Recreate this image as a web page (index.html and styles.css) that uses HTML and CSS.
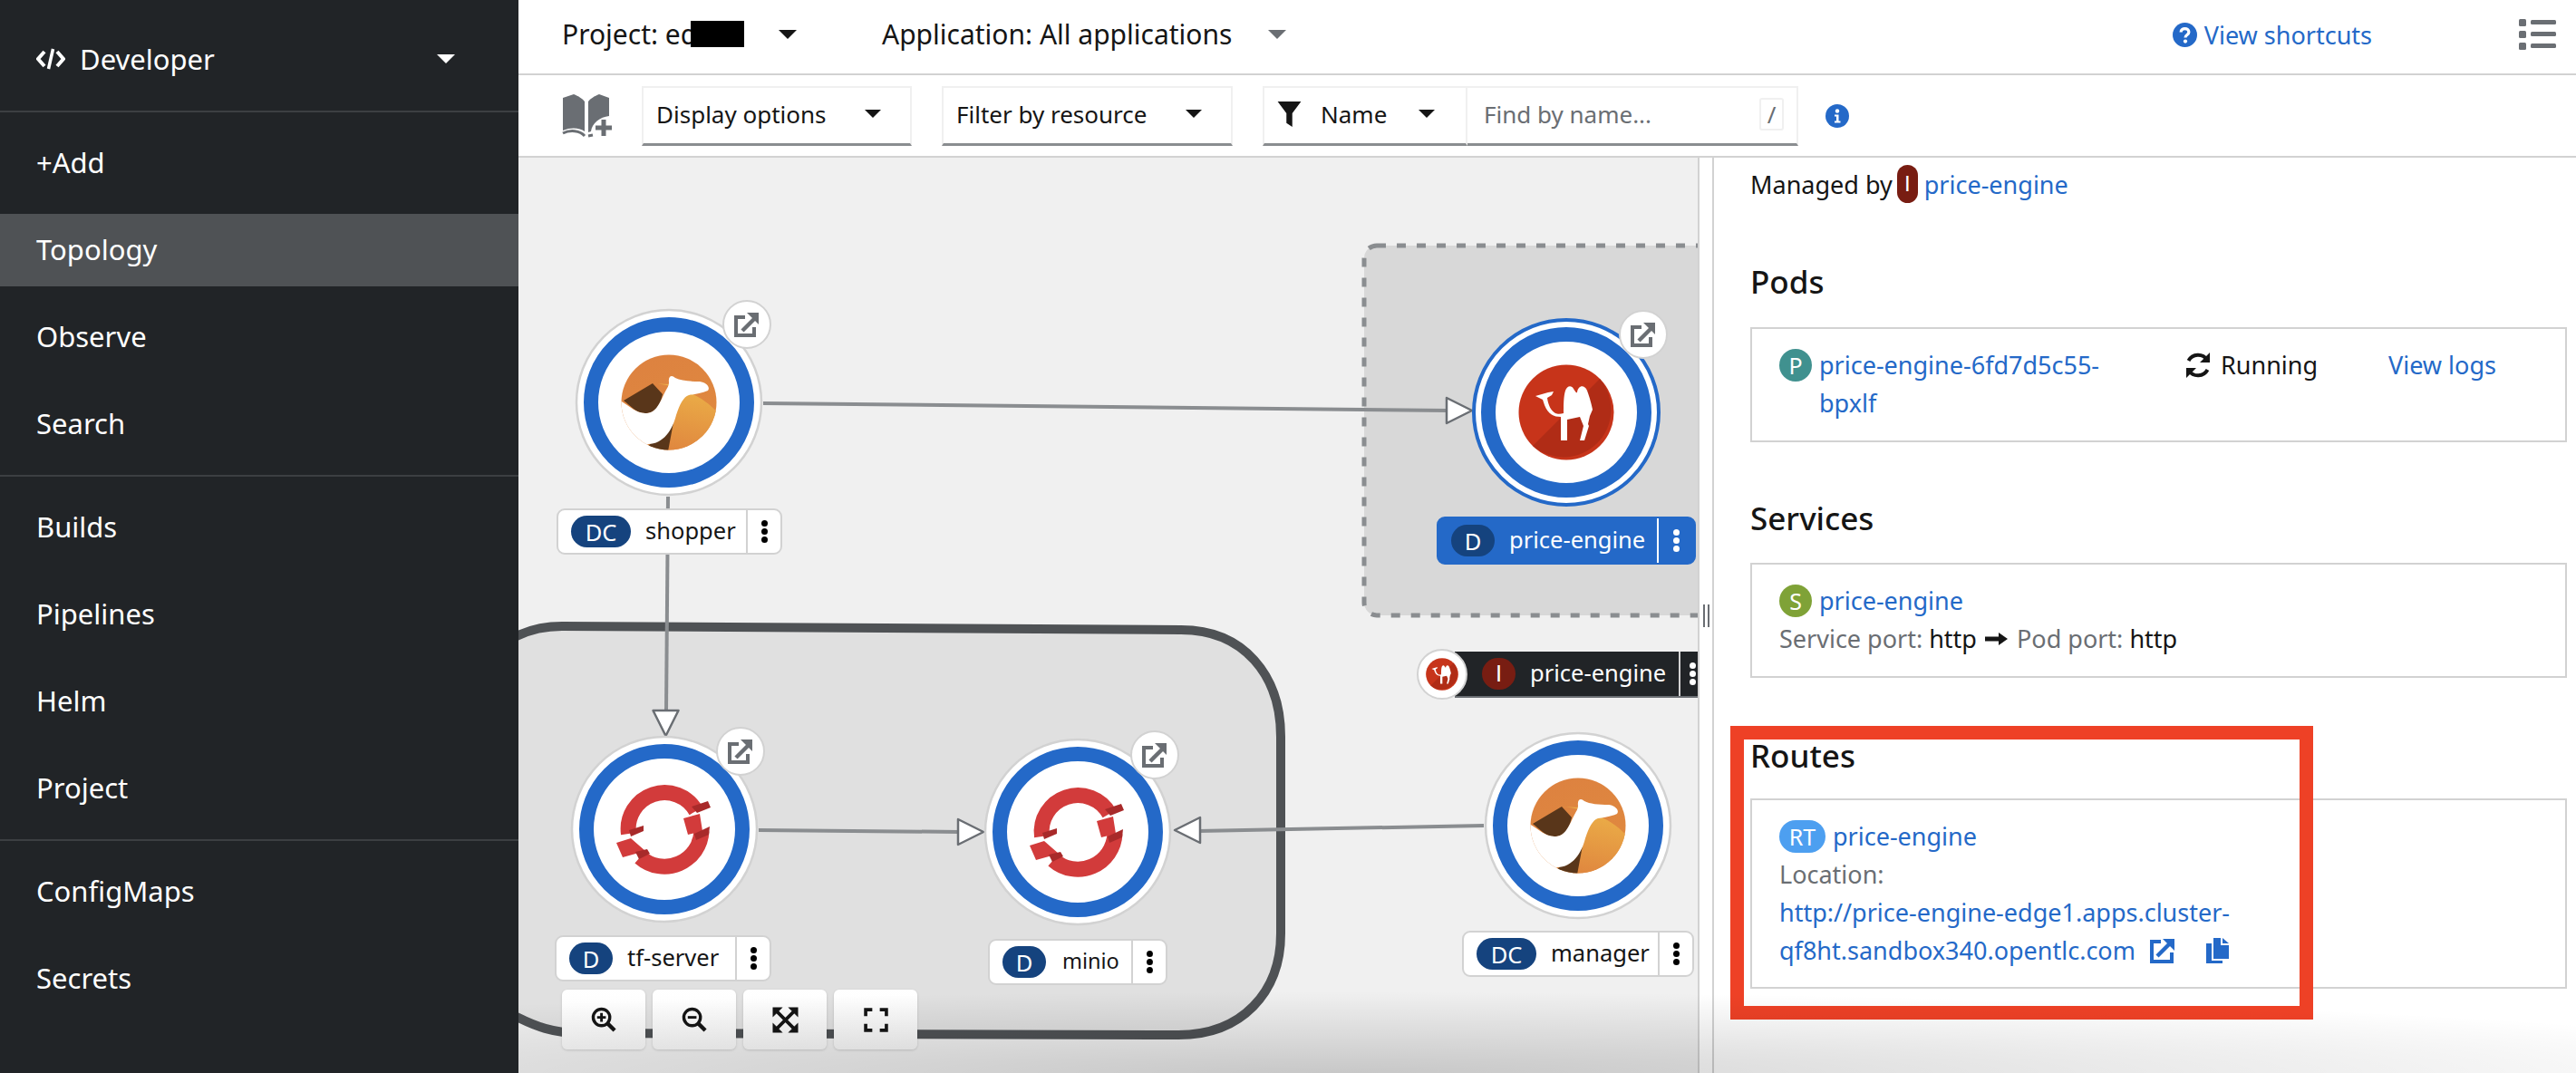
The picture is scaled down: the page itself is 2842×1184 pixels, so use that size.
FILE: index.html
```html
<!DOCTYPE html>
<html lang="en">
<head>
  <meta charset="UTF-8">
  <title>Topology</title>
  <link rel="stylesheet" href="styles.css">
</head>
<body>

<aside class="sidebar">
  <div class="perspective">
    <svg class="code-icon" viewBox="0 0 32 24"><path d="M9 4 L2 12 L9 20 M23 4 L30 12 L23 20" fill="none" stroke="#fff" stroke-width="4"/><path d="M18.5 1 L13.5 23" stroke="#fff" stroke-width="3.5"/></svg>
    <span>Developer</span>
    <i class="caret caret-white"></i>
  </div>
  <nav class="nav-group">
    <a>+Add</a>
    <a class="active">Topology</a>
    <a>Observe</a>
    <a>Search</a>
  </nav>
  <nav class="nav-group">
    <a>Builds</a>
    <a>Pipelines</a>
    <a>Helm</a>
    <a>Project</a>
  </nav>
  <nav class="nav-group">
    <a>ConfigMaps</a>
    <a>Secrets</a>
  </nav>
</aside>

<main class="main">
  <div class="context-bar">
    <div class="ctx ctx-project">Project: ed<span class="redact"></span><i class="caret"></i></div>
    <div class="ctx ctx-app">Application: All applications<i class="caret caret-gray"></i></div>
    <a class="shortcuts">
      <svg viewBox="0 0 28 28" class="help-icon"><circle cx="14" cy="14" r="14" fill="#2469c8"/><path d="M9.5 11 C9.5 5.5 18.5 5.5 18.5 11 C18.5 14 14.5 14 14.5 17" fill="none" stroke="#fff" stroke-width="3.4"/><circle cx="14.5" cy="21.3" r="2.2" fill="#fff"/></svg>
      View shortcuts
    </a>
    <svg class="list-icon" viewBox="0 0 41 34"><rect x="0" y="0" width="8" height="8" rx="1.5"/><rect x="0" y="13" width="8" height="8" rx="1.5"/><rect x="0" y="26" width="8" height="8" rx="1.5"/><rect x="13" y="1" width="28" height="5" rx="1.5"/><rect x="13" y="14" width="28" height="5" rx="1.5"/><rect x="13" y="27" width="28" height="5" rx="1.5"/></svg>
  </div>

  <div class="toolbar">
    <svg class="book-icon" viewBox="0 0 56 50"><path d="M1 5 L13 1 C18 3 23 6 25 9 V42 C20 38 10 37 1 41 Z M29 9 C31 6 36 3 41 1 L52 5 V25 C42 26 33 33 32 42 L29 43 Z" fill="#6a6e73"/><path d="M1 44 C9 40 20 41 25 47 M29 47 L34 46" fill="none" stroke="#6a6e73" stroke-width="3"/><path d="M46 29 V47 M37 38 H55" stroke="#6a6e73" stroke-width="5"/></svg>
    <div class="select select-display">Display options<i class="caret caret-small"></i></div>
    <div class="select select-resource">Filter by resource<i class="caret caret-small"></i></div>
    <div class="filter">
      <div class="select select-name">
        <svg class="funnel" viewBox="0 0 24 26"><path d="M0 0 H24 L15 12 V26 L9 22 V12 Z" fill="#151515"/></svg>
        Name<i class="caret caret-small"></i>
      </div>
      <div class="search"><span>Find by name...</span><kbd>/</kbd></div>
    </div>
    <svg class="info-icon" viewBox="0 0 26 26"><circle cx="13" cy="13" r="13" fill="#2469c8"/><circle cx="13" cy="7.5" r="2.2" fill="#fff"/><path d="M10 11.5 H14.5 V18.5 H16.5 V20.5 H10 V18.5 H12 V13.5 H10 Z" fill="#fff"/></svg>
  </div>

  <div class="workspace">
    <section class="canvas">
      <svg class="graph" viewBox="572 174 1301 1010">
        <defs>
          <g id="node-base">
            <circle r="102" fill="#fff" stroke="#d2d2d2" stroke-width="2.5"/>
            <circle r="86" fill="none" stroke="#2469c8" stroke-width="16"/>
          </g>
          <g id="node-selected">
            <circle r="102" fill="#fff" stroke="#2469c8" stroke-width="4"/>
            <circle r="86" fill="none" stroke="#2469c8" stroke-width="16"/>
          </g>
          <linearGradient id="sun" x1="0.3" y1="0" x2="0.7" y2="1">
            <stop offset="0" stop-color="#dd8240"/>
            <stop offset="1" stop-color="#e08a3f"/>
          </linearGradient>
          <linearGradient id="dune" x1="0.6" y1="0" x2="0.4" y2="1">
            <stop offset="0" stop-color="#ecb148"/>
            <stop offset="1" stop-color="#df843e"/>
          </linearGradient>
          <clipPath id="icon-clip"><circle r="52.5"/></clipPath>
          <g id="icon-kamel">
            <circle r="52.5" fill="url(#sun)"/>
            <g clip-path="url(#icon-clip)">
              <path d="M-20 -21 C10 -20 45 -5 60 20 L60 60 H-10 L0 -20 Z" fill="url(#dune)"/>
              <path d="M-50 -2 L-18 -21 L-7 -9 C-10 5 -16 12 -26 12 C-36 12 -42 4 -50 -2 Z" fill="#59361a"/>
              <path d="M5 22 L-1 54 L-25 50 Z" fill="#59361a"/>
              <path d="M-54 -2 C-44 4 -36 12 -26 12 C-14 12 -11 2 -4 -12 C-2 -16 0 -18 0 -22 C-1 -29 3 -31 7 -27 C13 -24 22 -23 34 -23 C41 -22 46 -17 43 -13 C36 -10 28 -9 22 -8 C16 -6 12 2 8 14 C4 30 -6 46 -23 46 L-40 60 L-60 30 Z" fill="#fff"/>
            </g>
          </g>
          <g id="camel-shape">
            <path d="M-34 -18 L-20 -22 L-14 -23 L-16 -19 L-21 -16 C-20 -8 -17 -2 -12 1 C-10 2 -6 2 -3 1 C-3 -8 -3 -18 -1 -24 C1 -30 6 -30 8 -26 C10 -23 11 -21 12 -22 C13 -30 20 -31 23 -24 C26 -16 28 -8 29 -3 L26 4 L24 13 L25 15 L20 31 L15 31 L19 15 L15 5 L1 8 L1 31 L-6 31 L-6 5 C-14 5 -20 2 -24 -8 L-26 -14 Z" fill="#fff"/>
          </g>
          <g id="icon-camel">
            <circle r="52.5" fill="#c7341a"/>
            <path d="M37 -37 A52.5 52.5 0 0 1 -37 37 Z" fill="#b02c16"/>
            <use href="#camel-shape"/>
          </g>
          <g id="icon-openshift" fill="none">
            <path d="M-39.5 5 A40 40 0 0 1 35 -20" stroke="#d23b3b" stroke-width="17"/>
            <path d="M41 2 A41 41 0 0 1 -27 31" stroke="#d23b3b" stroke-width="17"/>
            <path d="M21 -12 L39 -17 L42 2 L26 6 Z M-53 15 L-37 10 L-21 24 L-46 31 Z" fill="#d23b3b"/>
            <path d="M30 -25 L48 -31 L51 -24 L36 -18 Z M33 5 L50 -3 L49 6 L35 12 Z M-39 1 L-23 -4 L-23 2 L-37 8 Z M-32 25 L-19 22 L-16 27 L-28 33 Z" fill="#a82a2a"/>
          </g>
          <g id="decorator">
            <circle r="26" fill="#fff" stroke="#d2d2d2" stroke-width="2"/>
            <path d="M-2 -8 H-12 V12 H8 V3" fill="none" stroke="#6a6e73" stroke-width="4"/>
            <path d="M-5 7 L8 -6" stroke="#6a6e73" stroke-width="4.5"/>
            <path d="M0 -13 H13 V0 Z" fill="#6a6e73"/>
          </g>
          <polygon id="arrow-right" points="0,-14 28,0 0,14" fill="#fff" stroke="#6a6e73" stroke-width="2.5" stroke-linejoin="round"/>
        </defs>

        <!-- groups -->
        <path class="group-app" d="M500 800 C510 735 560 691 620 691 L1303 695 C1372 695 1413 745 1413 813 L1413 1030 C1413 1095 1370 1142 1300 1142 L640 1140 C610 1140 590 1132 572 1123 L500 1090 Z"/>
        <rect class="group-dashed" x="1505" y="271" width="500" height="408" rx="14"/>

        <!-- edges -->
        <path class="edge" d="M842 445 L1597 453"/>
        <path class="edge" d="M737 548 L735 785"/>
        <path class="edge" d="M837 916 L1058 918"/>
        <path class="edge" d="M1637 911 L1322 917"/>
        <use href="#arrow-right" transform="translate(1596 453)"/>
        <use href="#arrow-right" transform="translate(734.5 784) rotate(90)"/>
        <use href="#arrow-right" transform="translate(1057 918)"/>
        <use href="#arrow-right" transform="translate(1324 916) rotate(180)"/>

        <!-- nodes -->
        <g transform="translate(738 444)"><use href="#node-base"/><use href="#icon-kamel"/></g>
        <use href="#decorator" transform="translate(824 358)"/>
        <g transform="translate(1728 455)"><use href="#node-selected"/><use href="#icon-camel"/></g>
        <use href="#decorator" transform="translate(1813 369)"/>
        <g transform="translate(733 915)"><use href="#node-base"/><use href="#icon-openshift"/></g>
        <use href="#decorator" transform="translate(817 829)"/>
        <g transform="translate(1189 918)"><use href="#node-base"/><use href="#icon-openshift"/></g>
        <use href="#decorator" transform="translate(1274 833)"/>
        <g transform="translate(1741 911)"><use href="#node-base"/><use href="#icon-kamel"/></g>
      </svg>

      <div class="tag tag-shopper"><span class="pill pill-wide">DC</span><span class="tag-name">shopper</span><span class="kebab"><b></b><b></b><b></b></span></div>
      <div class="tag tag-selected"><span class="pill">D</span><span class="tag-name">price-engine</span><span class="kebab"><b></b><b></b><b></b></span></div>
      <div class="tag tag-tf"><span class="pill">D</span><span class="tag-name">tf-server</span><span class="kebab"><b></b><b></b><b></b></span></div>
      <div class="tag tag-minio"><span class="pill">D</span><span class="tag-name">minio</span><span class="kebab"><b></b><b></b><b></b></span></div>
      <div class="tag tag-manager"><span class="pill pill-wide">DC</span><span class="tag-name">manager</span><span class="kebab"><b></b><b></b><b></b></span></div>
      <div class="tag tag-dark"><span class="pill pill-red">I</span><span class="tag-name">price-engine</span><span class="kebab"><b></b><b></b><b></b></span></div>
      <svg class="dark-icon" viewBox="-28 -28 56 56"><circle r="27" fill="#fff" stroke="#d2d2d2" stroke-width="2"/><g transform="scale(0.34)"><use href="#icon-camel"/></g></svg>

      <div class="zoom-controls">
        <button><svg viewBox="0 0 28 28"><circle cx="11" cy="11" r="9.5" fill="none" stroke="#151515" stroke-width="3.5"/><path d="M11 6 V16 M6 11 H16" stroke="#151515" stroke-width="3"/><path d="M17.5 17.5 L26 26" stroke="#151515" stroke-width="4.5"/></svg></button>
        <button><svg viewBox="0 0 28 28"><circle cx="11" cy="11" r="9.5" fill="none" stroke="#151515" stroke-width="3.5"/><path d="M6 11 H16" stroke="#151515" stroke-width="3"/><path d="M17.5 17.5 L26 26" stroke="#151515" stroke-width="4.5"/></svg></button>
        <button><svg viewBox="0 0 26 26"><path d="M3 3 L23 23 M23 3 L3 23" stroke="#151515" stroke-width="3.5"/><path d="M0 0 H9 L0 9 Z M26 0 V9 L17 0 Z M0 26 V17 L9 26 Z M26 26 H17 L26 17 Z" fill="#151515" stroke="#151515" stroke-width="1"/></svg></button>
        <button><svg viewBox="0 0 26 26"><path d="M2 9 V2 H9 M17 2 H24 V9 M2 17 V24 H9 M17 24 H24 V17" fill="none" stroke="#151515" stroke-width="3.5"/></svg></button>
      </div>
    </section>

    <div class="resizer"><i></i><i></i></div>

    <section class="panel">
      <div class="managed">Managed by <span class="pill-narrow">I</span> <a>price-engine</a></div>

      <h3 class="h-pods">Pods</h3>
      <div class="card pod-row">
        <div class="pod-name"><span class="badge badge-pod">P</span><a>price-engine-6fd7d5c55-<br>bpxlf</a></div>
        <div class="pod-status">
          <svg viewBox="0 0 28 30" class="sync-icon"><path d="M24 9 A12 12 0 0 0 3.5 10 M4 21 A12 12 0 0 0 24.5 20" fill="none" stroke="#151515" stroke-width="4"/><path d="M27 1 V12 H16 Z M1 29 V18 H12 Z" fill="#151515"/></svg>
          Running
        </div>
        <a>View logs</a>
      </div>

      <h3 class="h-services">Services</h3>
      <div class="card">
        <div class="line"><span class="badge badge-svc">S</span><a>price-engine</a></div>
        <div class="line muted">Service port:&nbsp;<span class="dark">http</span>
          <svg class="long-arrow" viewBox="0 0 26 16"><path d="M0 8 H16" stroke="#151515" stroke-width="5"/><path d="M15 1 L25 8 L15 15 Z" fill="#151515"/></svg>
          Pod port:&nbsp;<span class="dark">http</span></div>
      </div>

      <h3 class="h-routes">Routes</h3>
      <div class="card card-route">
        <div class="line"><span class="badge badge-route">RT</span><a>price-engine</a></div>
        <div class="line muted">Location:</div>
        <div class="line"><a>http://price-engine-edge1.apps.cluster-</a></div>
        <div class="line">
          <a>qf8ht.sandbox340.opentlc.com</a>
          <svg class="route-ext" viewBox="0 0 28 28"><path d="M12 4 H2 V26 H24 V16" fill="none" stroke="#2469c8" stroke-width="4"/><path d="M8 20 L21 7" stroke="#2469c8" stroke-width="4.5"/><path d="M14 1 H27 V14 Z" fill="#2469c8"/></svg>
          <svg class="route-copy" viewBox="0 0 25 28"><path d="M8 0 H16 V8 H25 V23 H8 Z" fill="#2469c8"/><path d="M18 0 L25 6 H18 Z" fill="#2469c8"/><path d="M0 6 H6 V25 H18 V28 H0 Z" fill="#2469c8"/></svg>
        </div>
      </div>

      <div class="highlight"></div>
    </section>
    <div class="bottom-shade"></div>
  </div>
</main>

</body>
</html>
```

FILE: styles.css
```css
* { box-sizing: border-box; }
html, body { margin: 0; height: 100%; }
body { display: flex; width: 2842px; height: 1184px; overflow: hidden; font-family: "Noto Sans", Arial, sans-serif; font-size: 27px; color: #151515; background: #fff; }
a { color: #2469c8; text-decoration: none; }

/* sidebar */
.sidebar { width: 572px; flex: none; background: #212427; color: #fff; font-size: 31px; }
.perspective { height: 124px; padding: 8px 40px 0; display: flex; align-items: center; border-bottom: 2px solid #3c3f42; }
.code-icon { width: 32px; height: 24px; margin-right: 16px; }
.perspective .caret { margin-left: auto; margin-right: 30px; }
.nav-group { display: flex; flex-direction: column; gap: 16px; padding: 16px 0; border-bottom: 2px solid #3c3f42; }
.nav-group:last-child { border-bottom: none; }
.nav-group a { height: 80px; padding: 0 40px 3px; display: flex; align-items: center; color: #fff; }
.nav-group a.active { background: #4f5255; }

.caret { display: inline-block; width: 0; height: 0; border-left: 10px solid transparent; border-right: 10px solid transparent; border-top: 10px solid #151515; }
.caret-white { border-top-color: #fff; }
.caret-gray { border-top-color: #6a6e73; }
.caret-small { border-left-width: 9px; border-right-width: 9px; border-top-width: 9px; }

/* main column */
.main { flex: 1; min-width: 0; display: flex; flex-direction: column; }
.context-bar { height: 83px; flex: none; display: flex; align-items: center; padding-bottom: 6px; border-bottom: 2px solid #d2d2d2; font-size: 30px; }
.ctx { display: flex; align-items: center; }
.ctx-project { width: 353px; margin-left: 48px; }
.ctx-project .caret { margin-left: 38px; }
.ctx-app .caret { margin-left: 40px; }
.redact { width: 59px; height: 29px; margin-left: -7px; background: #000; }
.shortcuts { display: flex; align-items: center; margin-left: auto; font-size: 27px; padding-top: 1px; }
.help-icon { width: 27px; height: 27px; margin-right: 8px; }
.list-icon { width: 41px; height: 34px; margin: 0 22px 0 162px; fill: #6a6e73; }

.toolbar { height: 91px; flex: none; display: flex; align-items: center; padding-left: 48px; border-bottom: 2px solid #d2d2d2; font-size: 26px; }
.book-icon { width: 56px; height: 50px; margin-right: 32px; }
.select { height: 66px; display: flex; align-items: center; justify-content: space-between; padding: 0 32px 3px 14px; background: #fff; border: 2px solid #f0f0f0; border-bottom: 3px solid #8a8d90; }
.select-display { width: 298px; margin-right: 33px; }
.select-resource { width: 321px; margin-right: 33px; }
.filter { display: flex; }
.select-name { width: 226px; padding-right: 16px; justify-content: flex-start; }
.select-name .caret { margin-left: auto; margin-right: 18px; }
.funnel { width: 27px; height: 28px; margin-right: 21px; }
.search { width: 365px; height: 66px; display: flex; align-items: center; justify-content: space-between; padding: 0 14px 3px 18px; border: 2px solid #f0f0f0; border-bottom: 3px solid #8a8d90; border-left: none; color: #6a6e73; }
kbd { width: 27px; height: 36px; display: block; text-align: center; font: inherit; line-height: 32px; border: 2px solid #f0f0f0; border-radius: 3px; }
.info-icon { width: 26px; height: 26px; margin-left: 30px; }

/* canvas + side panel */
.workspace { flex: 1; min-height: 0; display: flex; position: relative; }
.canvas { width: 1301px; flex: none; position: relative; overflow: hidden; background: #f0f0f0; }
.graph { position: absolute; left: 0; top: 0; width: 1301px; height: 1010px; }
.group-app { fill: #e0e0e0; stroke: #4f5255; stroke-width: 10; }
.group-dashed { fill: #d8d8d8; stroke: #8a8d90; stroke-width: 5; stroke-dasharray: 10 12; }
.edge { fill: none; stroke: #8a8d90; stroke-width: 4; }

.tag { position: absolute; display: flex; align-items: center; height: 51px; padding-left: 14px; background: #fff; border: 2px solid #d2d2d2; border-radius: 9px; font-size: 25.5px; }
.pill { width: 48px; height: 35px; flex: none; display: flex; align-items: center; justify-content: center; border-radius: 18px; background: #15437e; color: #fff; }
.pill-wide { width: 66px; }
.pill-red { width: 37px; background: #781d12; font-family: "Liberation Sans", Arial, sans-serif; }
.tag-name { margin-left: 16px; padding-bottom: 3px; white-space: nowrap; }
.tag-minio .tag-name { font-size: 23.5px; margin-left: 18px; }
.kebab { width: 38px; height: 100%; margin-left: auto; flex: none; display: flex; flex-direction: column; align-items: center; justify-content: center; gap: 2px; border-left: 2px solid #d2d2d2; }
.kebab b { width: 7px; height: 7px; border-radius: 50%; background: #000; }

.tag-shopper { left: 42px; top: 387px; width: 249px; }
.tag-selected { left: 1013px; top: 396px; width: 286px; height: 53px; background: #2469c8; border-color: #2469c8; color: #fff; }
.tag-selected .kebab { border-left-color: #fff; width: 41px; }
.tag-selected .kebab b { background: #fff; }
.tag-tf { left: 40px; top: 858px; width: 239px; }
.tag-minio { left: 518px; top: 862px; width: 198px; }
.tag-manager { left: 1041px; top: 853px; width: 256px; }
.tag-dark { left: 1033px; top: 545px; width: 268px; background: #212427; border: none; border-bottom: 2px solid #6a6e73; border-radius: 0; padding-left: 30px; color: #fff; }
.tag-dark .kebab { width: 21px; border-left-color: #d2d2d2; align-items: flex-start; padding-left: 10px; }
.tag-dark .kebab b { background: #fff; }
.dark-icon { position: absolute; left: 991px; top: 542px; width: 56px; height: 56px; }

.zoom-controls { position: absolute; left: 48px; bottom: 26px; display: flex; gap: 8px; }
.zoom-controls button { width: 92px; height: 66px; display: flex; align-items: center; justify-content: center; padding: 0; border: none; border-radius: 6px; background: linear-gradient(#fff, #f7f7f7); box-shadow: 0 1px 3px rgba(0,0,0,0.15); }
.zoom-controls svg { width: 27px; height: 27px; overflow: visible; }

.resizer { width: 18px; flex: none; display: flex; justify-content: center; align-items: center; gap: 3px; border-left: 2px solid #d2d2d2; border-right: 2px solid #d2d2d2; }
.resizer i { width: 2px; height: 25px; background: #6a6e73; }

.panel { flex: 1; min-width: 0; padding: 9px 10px 0 40px; position: relative; overflow: hidden; }
.managed { height: 42px; display: flex; align-items: center; gap: 5px; padding-bottom: 2px; }
.managed a { margin-left: 2px; }
.pill-narrow { width: 23px; height: 42px; display: flex; align-items: center; justify-content: center; border-radius: 12px; background: #781d12; color: #fff; font-size: 24px; font-family: "Liberation Sans", Arial, sans-serif; }
h3 { font-size: 35px; font-weight: 500; line-height: 42px; }
h3.h-pods { margin: 65px 0 29px; }
h3.h-services { margin: 63px 0 28px; }
h3.h-routes { margin: 65px 0 26px; }
.card { padding: 19px 30px 20px; border: 2px solid #d2d2d2; line-height: 42px; }
.card-route { padding-bottom: 19px; }
.line { height: 42px; display: flex; align-items: center; }
.muted { color: #6a6e73; }
.dark { color: #151515; }
.badge { height: 36px; min-width: 36px; margin-right: 8px; flex: none; display: inline-flex; align-items: center; justify-content: center; border-radius: 18px; color: #fff; font-size: 25px; }
.badge-pod { background: #40918f; margin-top: 3px; }
.badge-svc { background: #7fa237; }
.badge-route { width: 51px; background: #4d9ff0; }
.pod-row { display: flex; }
.pod-name { width: 448px; display: flex; align-items: flex-start; }
.pod-status { width: 184px; height: 42px; display: flex; align-items: center; gap: 11px; margin-right: 40px; }
.sync-icon { width: 28px; height: 30px; }
.long-arrow { width: 26px; height: 16px; margin: 0 9px; }
.route-ext { width: 28px; height: 28px; margin-left: 16px; }
.route-copy { width: 25px; height: 28px; margin-left: 34px; }

.highlight { position: absolute; left: 18px; top: 627px; width: 643px; height: 324px; border: 15px solid #ee4126; }
.bottom-shade { position: absolute; left: 0; right: 0; bottom: 0; height: 90px; pointer-events: none; background: radial-gradient(ellipse 1700px 90px at 40% 100%, rgba(0,0,0,0.17), rgba(0,0,0,0)); }
```
